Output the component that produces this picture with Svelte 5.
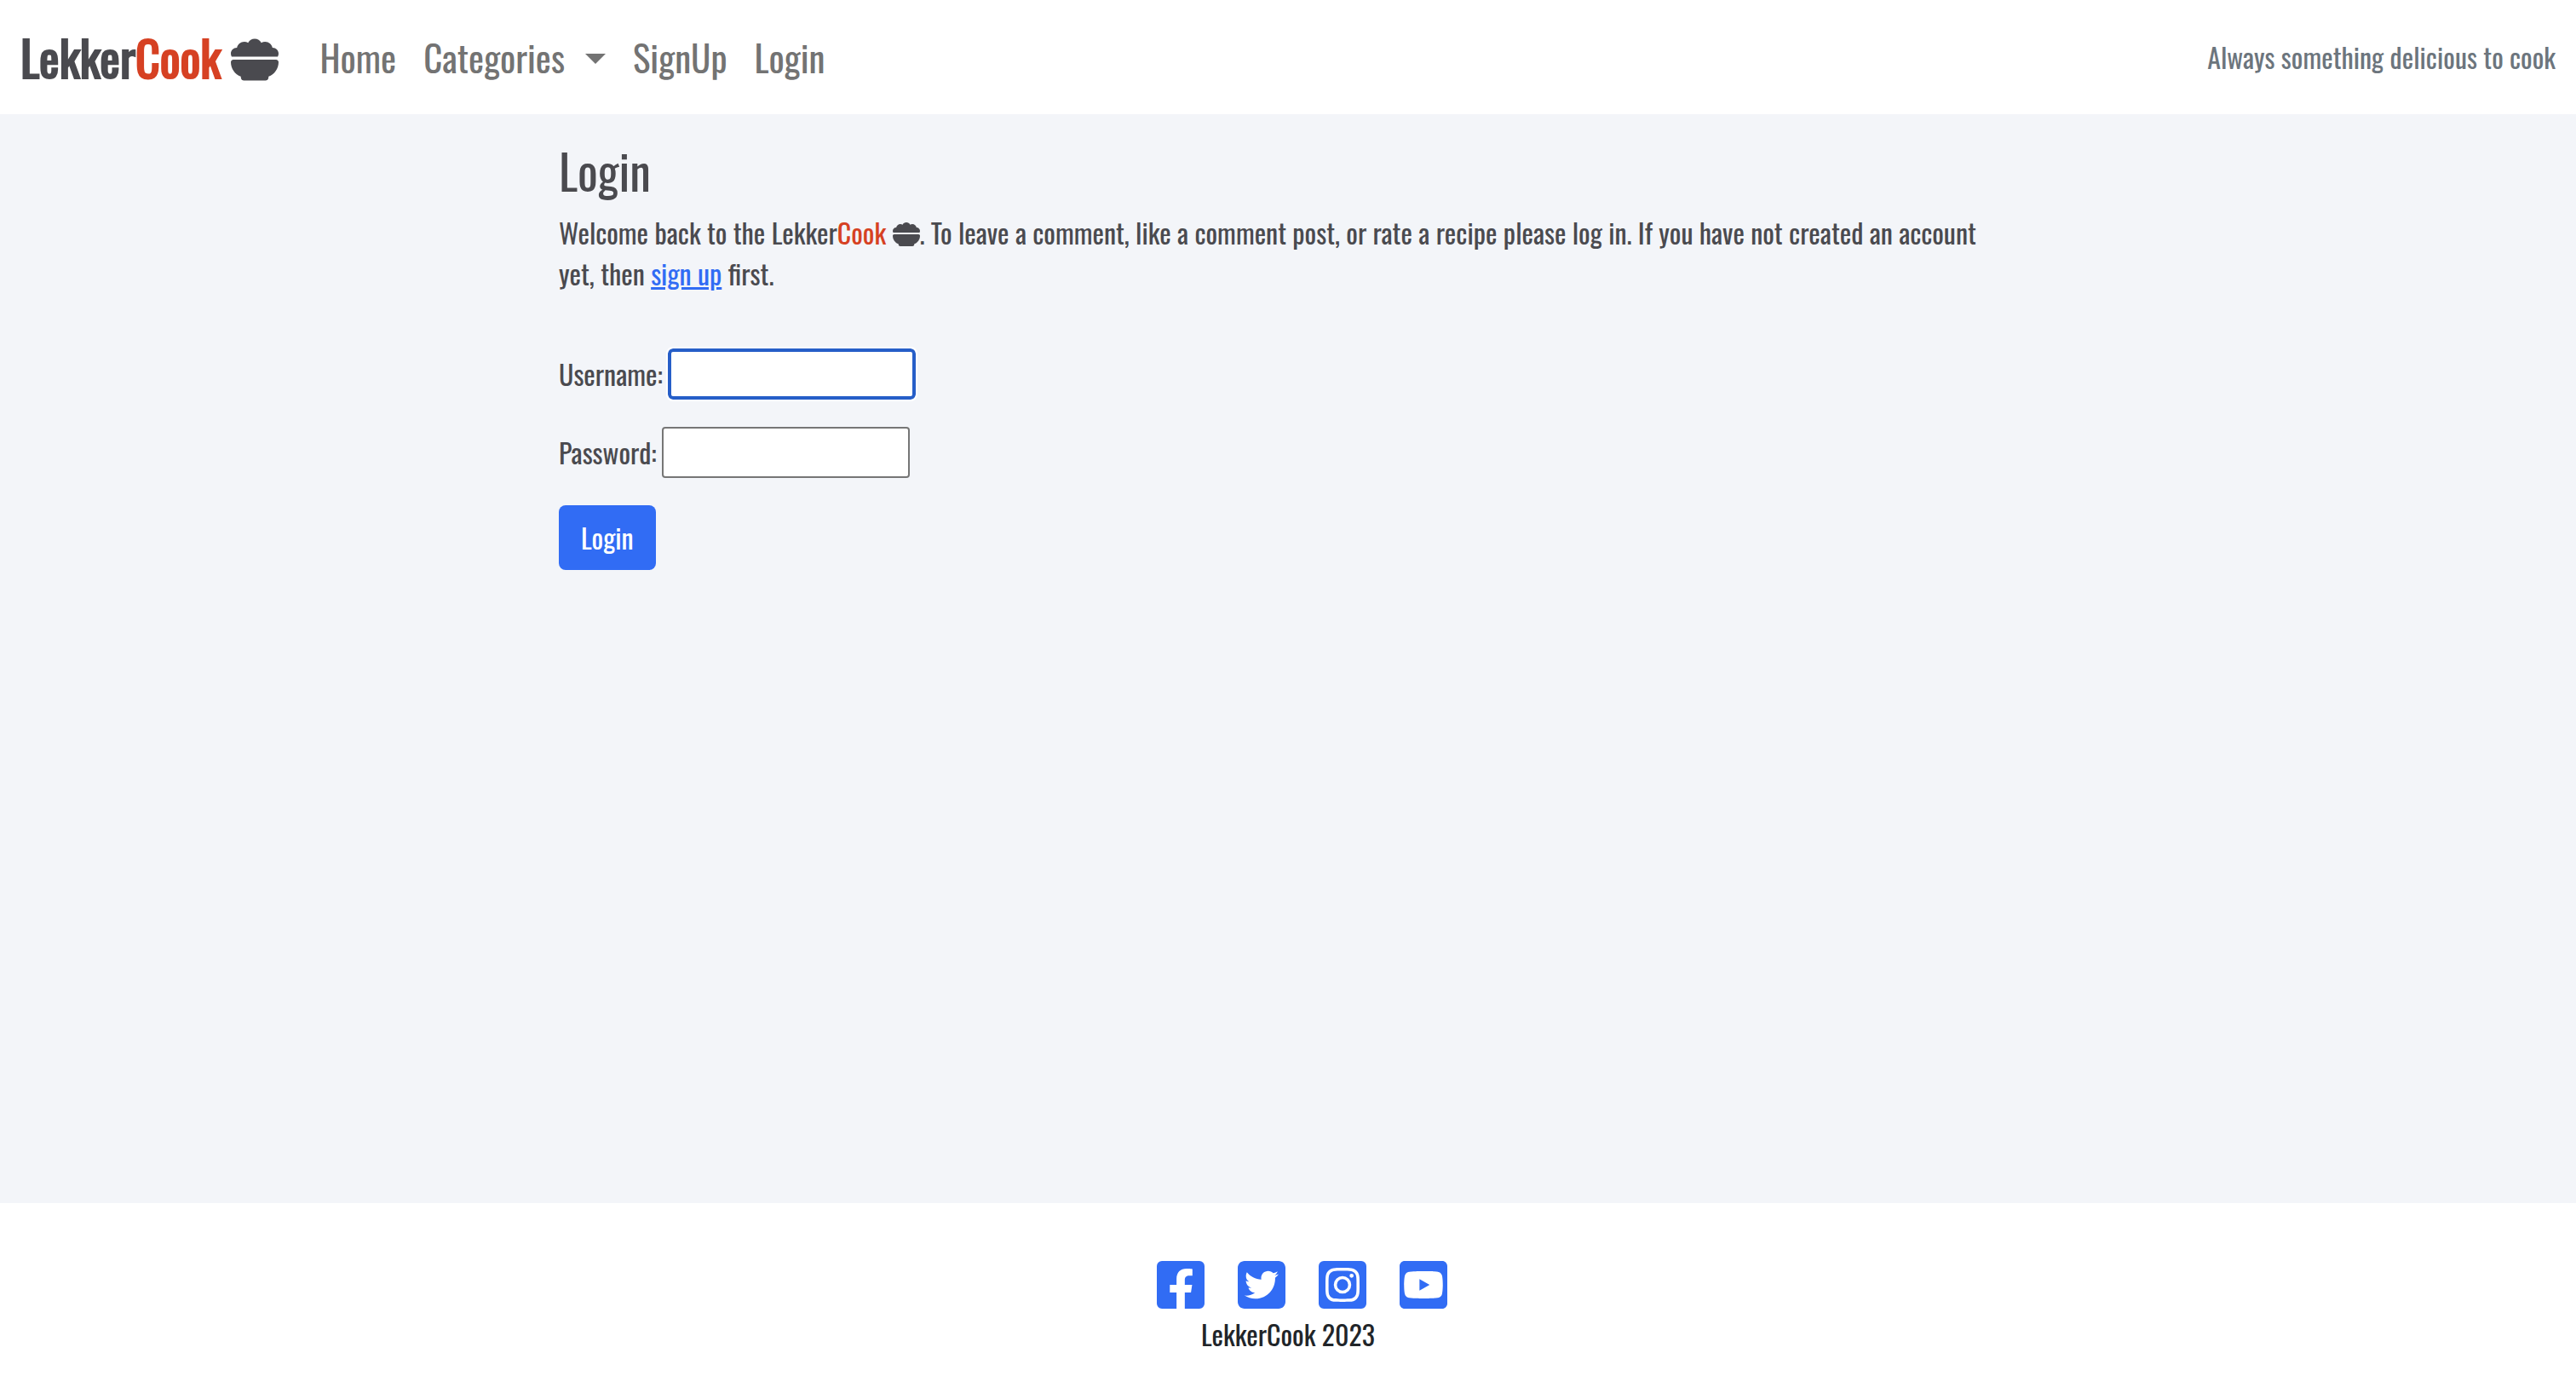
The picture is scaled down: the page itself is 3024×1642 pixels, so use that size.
<script lang="ts">
  const links = [
    { name: 'Facebook', d: 'M400 32H48A48 48 0 0 0 0 80v352a48 48 0 0 0 48 48h137.25V327.69h-63V256h63v-54.64c0-62.15 37-96.48 93.67-96.48 27.14 0 55.52 4.84 55.52 4.84v61h-31.27c-30.81 0-40.42 19.12-40.42 38.73V256h68.78l-11 71.69h-57.78V480H400a48 48 0 0 0 48-48V80a48 48 0 0 0-48-48z' },
    { name: 'Twitter', d: 'M384 32H64C28.7 32 0 60.7 0 96v320c0 35.3 28.7 64 64 64h320c35.3 0 64-28.7 64-64V96c0-35.3-28.7-64-64-64zM351.1 190.8c.2 2.8.2 5.7.2 8.5 0 86.7-66 186.6-186.6 186.6-37.2 0-71.7-10.8-100.7-29.4 5.3.6 10.4.8 15.8.8 30.7 0 58.9-10.4 81.4-28-28.8-.6-53-19.5-61.3-45.5 10.1 1.5 19.2 1.5 29.6-1.2-30-6.1-52.5-32.5-52.5-64.4v-.8c8.7 4.9 18.9 7.9 29.6 8.3a65.447 65.447 0 0 1-29.2-54.6c0-12.2 3.2-23.4 8.9-33.1 32.3 39.8 80.8 65.8 135.2 68.6-9.3-44.5 24-80.6 64-80.6 18.9 0 35.9 7.9 47.9 20.7 14.8-2.8 29-8.3 41.6-15.8-4.9 15.2-15.2 28-28.8 36.1 13.2-1.4 26-5.1 37.8-10.2-8.9 13.1-20.1 24.7-32.9 34z' },
    { name: 'Instagram', d: 'M224,202.66A53.34,53.34,0,1,0,277.36,256,53.38,53.38,0,0,0,224,202.66Zm124.71-41a54,54,0,0,0-30.41-30.41c-21-8.29-71-6.43-94.3-6.43s-73.25-1.93-94.31,6.43a54,54,0,0,0-30.41,30.41c-8.28,21-6.43,71.05-6.43,94.33S91,329.26,99.32,350.33a54,54,0,0,0,30.41,30.41c21,8.29,71,6.43,94.31,6.43s73.24,1.93,94.3-6.43a54,54,0,0,0,30.41-30.41c8.35-21,6.43-71.05,6.43-94.33S357.1,182.74,348.75,161.67ZM224,338a82,82,0,1,1,82-82A81.9,81.9,0,0,1,224,338Zm85.38-148.3a19.14,19.14,0,1,1,19.13-19.14A19.1,19.1,0,0,1,309.42,189.74ZM400,32H48A48,48,0,0,0,0,80V432a48,48,0,0,0,48,48H400a48,48,0,0,0,48-48V80A48,48,0,0,0,400,32ZM382.88,322c-1.29,25.63-7.14,48.34-25.85,67s-41.4,24.63-67,25.85c-26.41,1.49-105.59,1.49-132,0-25.63-1.29-48.26-7.15-67-25.85s-24.63-41.42-25.85-67c-1.49-26.42-1.49-105.61,0-132,1.29-25.63,7.07-48.34,25.85-67s41.47-24.56,67-25.78c26.41-1.49,105.59-1.49,132,0,25.63,1.29,48.33,7.15,67,25.85s24.63,41.42,25.85,67.05C384.37,216.44,384.37,295.56,382.88,322Z' },
    { name: 'YouTube', d: 'M186.8 202.1l95.2 54.1-95.2 54.1V202.1zM448 80v352c0 26.5-21.5 48-48 48H48c-26.5 0-48-21.5-48-48V80c0-26.5 21.5-48 48-48h352c26.5 0 48 21.5 48 48zm-42 176.3s0-59.6-7.6-88.2c-4.2-15.8-16.5-28.2-32.2-32.4C337.9 128 224 128 224 128s-113.9 0-142.2 7.7c-15.7 4.2-28 16.6-32.2 32.4-7.6 28.5-7.6 88.2-7.6 88.2s0 59.6 7.6 88.2c4.2 15.8 16.5 27.7 32.2 31.9C110.1 384 224 384 224 384s113.9 0 142.2-7.7c15.7-4.2 28-16.1 32.2-31.9 7.6-28.5 7.6-88.1 7.6-88.1z' },
  ];
  let username = $state('');
  let password = $state('');
</script>

{#snippet bowl()}
  <svg class="bowl" viewBox="0 0 512 512" aria-hidden="true"><path d="M0 192c0-35.3 28.7-64 64-64c.5 0 1.1 0 1.6 0C73 91.5 105.3 64 144 64c15 0 29 4.1 40.9 11.2C198.2 49.6 225.1 32 256 32s57.8 17.6 71.1 43.2C339 68.1 353 64 368 64c38.7 0 71 27.5 78.4 64c.5 0 1.1 0 1.6 0c35.3 0 64 28.7 64 64c0 11.7-3.1 22.6-8.6 32H8.6C3.1 214.6 0 203.7 0 192zm0 91.4C0 268.3 12.3 256 27.4 256H484.6c15.1 0 27.4 12.3 27.4 27.4c0 70.5-44.4 130.7-106.7 154.1L403.5 452c-2 16-15.6 28-31.8 28H140.2c-16.1 0-29.8-12-31.8-28l-1.8-14.4C44.4 414.1 0 353.9 0 283.4z" /></svg>
{/snippet}

<div class="page">
  <header>
    <a class="brand" href="#home"><span>Lekker<span class="accent">Cook</span></span>{@render bowl()}</a>
    <nav>
      <a href="#home">Home</a>
      <button type="button" class="dropdown" aria-haspopup="true">Categories<span class="caret"></span></button>
      <a href="#signup">SignUp</a>
      <a href="#login">Login</a>
    </nav>
    <p class="tagline">Always something delicious to cook</p>
  </header>

  <main>
    <h1>Login</h1>
    <p>
      Welcome back to the Lekker<span class="accent">Cook</span> {@render bowl()}. To leave a comment, like a comment post, or
      rate a recipe please log in. If you have not created an account yet, then <a href="#signup">sign up</a> first.
    </p>
    <form onsubmit={(e) => e.preventDefault()}>
      <div class="field">
        <label for="username">Username:</label>
        <input id="username" class="current" type="text" bind:value={username} />
      </div>
      <div class="field">
        <label for="password">Password:</label>
        <input id="password" type="password" bind:value={password} />
      </div>
      <button type="submit" class="submit">Login</button>
    </form>
  </main>

  <footer>
    <ul>
      {#each links as link}
        <li>
          <a href="#{link.name.toLowerCase()}" aria-label={link.name}>
            <svg viewBox="0 32 448 448" aria-hidden="true"><path fill-rule="evenodd" d={link.d} /></svg>
          </a>
        </li>
      {/each}
    </ul>
    <p>LekkerCook 2023</p>
  </footer>
</div>

<style>
  :global(body) {
    margin: 0;
  }
  .page {
    display: flex;
    flex-direction: column;
    min-height: 100vh;
    background: #f3f5f9;
    color: #4a4a4f;
    font-family: Oswald, 'Liberation Sans Narrow', 'Liberation Sans', sans-serif;
    font-size: 32px;
    line-height: 48px;
  }
  h1,
  p,
  ul {
    margin: 0;
    padding: 0;
  }
  svg {
    display: block;
    fill: currentColor;
  }
  .accent {
    color: #d64123;
  }
  header {
    display: flex;
    align-items: center;
    box-sizing: border-box;
    min-height: 134px;
    padding: 0 24px;
    background: #fff;
  }
  .brand {
    display: flex;
    align-items: center;
    gap: 12px;
    margin-right: 48px;
    color: inherit;
    font-size: 56px;
    text-decoration: none;
    -webkit-text-stroke: 2px currentColor;
  }
  .brand .bowl {
    width: 56px;
    height: 56px;
    margin-top: 6px;
  }
  nav {
    display: flex;
    flex: 1;
    gap: 32px;
    font-size: 43px;
  }
  nav a,
  .dropdown {
    padding: 0;
    border: 0;
    background: none;
    color: #737373;
    font: inherit;
    text-decoration: none;
  }
  .dropdown {
    display: flex;
    align-items: center;
    gap: 24px;
  }
  .caret {
    margin-top: 4px;
    border: 12px solid transparent;
    border-top-color: currentColor;
    border-bottom: 0;
  }
  .tagline {
    color: #6c757d;
  }
  main {
    box-sizing: border-box;
    width: 100%;
    max-width: 1760px;
    flex: 1;
    margin: 0 auto;
    padding: 32px 24px;
  }
  h1 {
    margin-bottom: 16px;
    font-size: 56px;
    font-weight: 400;
    line-height: 67px;
  }
  main .bowl {
    display: inline-block;
    width: 32px;
    height: 32px;
    vertical-align: -4px;
  }
  main a {
    color: #316cf4;
  }
  form {
    display: flex;
    flex-direction: column;
    align-items: flex-start;
    gap: 32px;
    margin-top: 64px;
  }
  .field {
    display: flex;
    align-items: center;
    gap: 6px;
  }
  input {
    box-sizing: border-box;
    width: 291px;
    height: 60px;
    padding: 2px 4px;
    border: 2px solid #767676;
    border-radius: 4px;
    background: #fff;
    color: inherit;
    font: inherit;
  }
  .current,
  input:focus {
    border: 4px solid #265ec8;
    border-radius: 6px;
    outline: 2px solid #fff;
  }
  .submit {
    padding: 14px 26px;
    border: 0;
    border-radius: 8px;
    background: #316cf4;
    color: #fff;
    font: inherit;
  }
  footer {
    display: flex;
    flex-direction: column;
    align-items: center;
    box-sizing: border-box;
    min-height: 230px;
    padding-top: 68px;
    background: #fff;
    color: #212529;
  }
  footer ul {
    display: flex;
    gap: 39px;
    padding-left: 32px;
    margin-bottom: 6px;
    list-style: none;
  }
  footer a {
    color: #316cf4;
  }
  footer svg {
    width: 56px;
    height: 56px;
  }
</style>
